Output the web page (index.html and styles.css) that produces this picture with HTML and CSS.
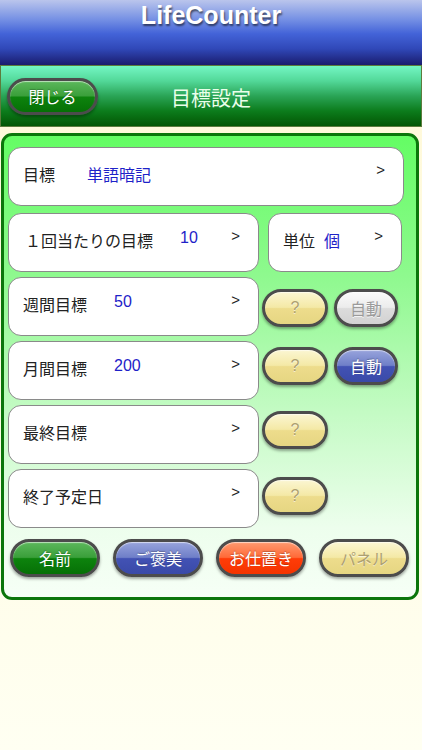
FILE: index.html
```html
<!DOCTYPE html>
<html lang="ja">
<head>
    <meta charset="UTF-8">
    <meta name="viewport" content="width=device-width, initial-scale=1.0">
    <title>LifeCounter - 目標設定</title>
    <link rel="stylesheet" href="styles.css">
</head>
<body>
    <header class="app-header">
        <h1>LifeCounter</h1>
    </header>

    <div class="nav-bar">
        <div class="nav-left">
            <button class="pill pill-green btn-close">閉じる</button>
        </div>
        <div class="nav-title">目標設定</div>
        <div></div>
    </div>

    <div class="panel">
        <div class="row row-first">
            <div class="card card-full">
                <span class="label label-sm">目標</span>
                <span class="value">単語暗記</span>
                <span class="arrow">&gt;</span>
            </div>
        </div>

        <div class="row">
            <div class="card">
                <span class="label label-wide">１回当たりの目標</span>
                <span class="value num">10</span>
                <span class="arrow">&gt;</span>
            </div>
            <div class="card card-unit">
                <span class="label label-unit">単位</span>
                <span class="value">個</span>
                <span class="arrow">&gt;</span>
            </div>
        </div>

        <div class="row">
            <div class="card">
                <span class="label label-md">週間目標</span>
                <span class="value num">50</span>
                <span class="arrow">&gt;</span>
            </div>
            <div class="side-btns side-low">
                <button class="pill pill-yellow btn-help">?</button>
                <button class="pill pill-grey btn-auto">自動</button>
            </div>
        </div>

        <div class="row">
            <div class="card">
                <span class="label label-md">月間目標</span>
                <span class="value num">200</span>
                <span class="arrow">&gt;</span>
            </div>
            <div class="side-btns">
                <button class="pill pill-yellow btn-help">?</button>
                <button class="pill pill-blue btn-auto">自動</button>
            </div>
        </div>

        <div class="row">
            <div class="card">
                <span class="label">最終目標</span>
                <span class="arrow">&gt;</span>
            </div>
            <div class="side-btns">
                <button class="pill pill-yellow btn-help">?</button>
            </div>
        </div>

        <div class="row">
            <div class="card">
                <span class="label">終了予定日</span>
                <span class="arrow">&gt;</span>
            </div>
            <div class="side-btns side-mid">
                <button class="pill pill-yellow btn-help">?</button>
            </div>
        </div>

        <div class="bottom-btns">
            <button class="pill pill-green">名前</button>
            <button class="pill pill-blue">ご褒美</button>
            <button class="pill pill-red">お仕置き</button>
            <button class="pill pill-yellow">パネル</button>
        </div>
    </div>
</body>
</html>
```

FILE: styles.css
```css
/* Reset */
* {
    margin: 0;
    padding: 0;
    box-sizing: border-box;
}

body {
    width: 422px;
    min-height: 750px;
    font-family: "Noto Sans CJK JP", "Liberation Sans", sans-serif;
    background: linear-gradient(#fff8d6, #fffde8 70%, #fffff2);
    color: #222;
}

/* Top title bar */
.app-header {
    height: 65px;
    background: linear-gradient(#bac5ec 0%, #7590e4 30%, #4363d8 52%, #3048b8 75%, #1a1c6e 100%);
    text-align: center;
}

.app-header h1 {
    font-family: "Liberation Sans", Arial, sans-serif;
    font-size: 25px;
    font-weight: bold;
    line-height: 31px;
    color: #fff;
    text-shadow: 1px 2px 2px rgba(0, 0, 0, 0.55);
}

/* Green navigation bar */
.nav-bar {
    height: 62px;
    display: grid;
    grid-template-columns: 1fr auto 1fr;
    align-items: center;
    border: 1px solid #5c7c3c;
    background: linear-gradient(#74f6c4 0%, #52d898 25%, #2aa456 50%, #0c7c1c 75%, #035603 100%);
}

.nav-left {
    padding-left: 6px;
}

.nav-title {
    font-size: 20px;
    color: #eaffea;
    padding-top: 2px;
}

/* Main settings panel */
.panel {
    margin: 6px 3px 0 1px;
    border: 3px solid #0b760b;
    border-radius: 11px;
    padding: 11px 12px 20px 4px;
    background: linear-gradient(#64fd64 0%, #8ef98e 30%, #c4fbc4 60%, #edfeed 85%, #f6fff6 100%);
}

.row {
    display: flex;
    align-items: flex-start;
    margin-bottom: 5px;
}

.row-first {
    margin-bottom: 7px;
}

/* Setting cards */
.card {
    position: relative;
    width: 251px;
    height: 59px;
    display: flex;
    align-items: flex-start;
    padding: 16px 0 0 14px;
    background: #fff;
    border: 1px solid #8a8a8a;
    border-radius: 13px;
    font-size: 16px;
    line-height: 20px;
}

.card-full {
    width: 396px;
}

.card-unit {
    width: 134px;
    margin-left: 9px;
}

.label {
    color: #222;
    white-space: nowrap;
}

.label-sm {
    width: 64px;
}

.label-md {
    width: 91px;
}

.label-wide {
    width: 157px;
    padding-left: 2px;
}

.label-unit {
    width: 41px;
}

.value {
    color: #1e22c8;
}

.value.num {
    font-family: "Liberation Sans", Arial, sans-serif;
    margin-top: -2px;
}

.arrow {
    position: absolute;
    top: 12px;
    right: 18px;
    font-family: "Liberation Sans", Arial, sans-serif;
    font-size: 15px;
    color: #222;
}

/* Glossy pill buttons */
.pill {
    height: 38px;
    border: 3px solid #4c4c4c;
    border-radius: 19px;
    font-family: "Noto Sans CJK JP", "Liberation Sans", sans-serif;
    font-size: 16px;
    color: #fff;
    text-shadow: 0 -1px 1px rgba(0, 0, 0, 0.25);
    box-shadow: 0 2px 3px rgba(0, 0, 0, 0.35), inset 0 1px 1px rgba(255, 255, 255, 0.6);
    cursor: pointer;
}

.pill-green {
    background: linear-gradient(#5cb85c 0%, #3a9f3a 48%, #0d830d 52%, #067006 100%);
}

.pill-blue {
    background: linear-gradient(#98a4dc 0%, #6f7fc8 48%, #4252b4 52%, #3a4aa8 100%);
}

.pill-red {
    background: linear-gradient(#ff9a70 0%, #ff6a38 48%, #ff3c08 52%, #f43400 100%);
}

.pill-yellow {
    background: linear-gradient(#fbf6d2 0%, #f4e9a6 48%, #eddc8c 52%, #e6d682 100%);
    color: #ada070;
    text-shadow: 0 1px 0 rgba(255, 255, 255, 0.6);
}

.pill-grey {
    background: linear-gradient(#fafafa 0%, #ececec 48%, #dcdcdc 52%, #d2d2d2 100%);
    color: #9a9a9a;
    text-shadow: 0 1px 0 rgba(255, 255, 255, 0.7);
}

.btn-close {
    width: 91px;
    height: 37px;
}

.side-btns {
    display: flex;
    gap: 6px;
    margin: 6px 0 0 3px;
}

.side-low {
    margin-top: 12px;
}

.side-mid {
    margin-top: 8px;
}

.btn-help {
    width: 66px;
    font-family: "Liberation Sans", Arial, sans-serif;
}

.btn-auto {
    width: 64px;
}

/* Bottom action buttons */
.bottom-btns {
    display: flex;
    gap: 13px;
    margin: 11px -7px 0 2px;
}

.bottom-btns .pill {
    width: 90px;
}
```
